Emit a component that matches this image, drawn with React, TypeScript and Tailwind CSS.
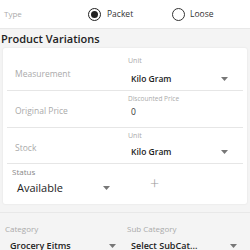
import React from "react";

const Caret = () => (
  <svg width="7" height="4" viewBox="0 0 7 4" className="shrink-0">
    <path d="M0 0 L7 0 L3.5 4 Z" fill="#777" />
  </svg>
);

export default function App() {
  return (
    <div
      className="w-[250px] h-[250px] overflow-hidden bg-[#f4f4f4] text-[#333]"
      style={{ fontFamily: '"Open Sans", sans-serif' }}
    >
      <div className="h-[29px] bg-white border-b border-[#e8e8e8] flex items-center">
        <div className="w-[88px] pl-[4px] text-[8px] text-[#aaa]">Type</div>
        <div className="flex items-center gap-[6px] w-[84px]">
          <div className="w-[13px] h-[13px] rounded-full border-[1.5px] border-[#222] flex items-center justify-center">
            <div className="w-[7px] h-[7px] rounded-full bg-[#222]" />
          </div>
          <span className="text-[8.5px] text-[#333]">Packet</span>
        </div>
        <div className="flex items-center gap-[5px]">
          <div className="w-[13px] h-[13px] rounded-full border-[1.5px] border-[#333]" />
          <span className="text-[8.5px] text-[#333]">Loose</span>
        </div>
      </div>
      <div className="pt-[3px] pl-[1px] text-[11px] font-semibold text-[#222] leading-[14px]">Product Variations</div>
      <div className="mx-[3px] mt-[2px] bg-white rounded-[2px] shadow-[0_0_2px_rgba(0,0,0,0.1)] px-[4px]">
        <div className="flex border-b border-[#e6e6e6] h-[43px]">
          <div className="w-[121px] pl-[8px] pt-[20px] text-[8.5px] leading-[12px] text-[#aaa]">Measurement</div>
          <div className="flex-1 pt-[8px]">
            <div className="text-[7px] text-[#aaa] leading-[10px]">Unit</div>
            <div className="flex items-center justify-between pl-[3px] pr-[15px] mt-[7px] h-[12px]">
              <span className="text-[8.5px] font-semibold text-[#222] leading-[12px]">Kilo Gram</span>
              <Caret />
            </div>
          </div>
        </div>
        <div className="flex border-b border-[#e6e6e6] h-[37px]">
          <div className="w-[121px] pl-[8px] pt-[14px] text-[8.5px] leading-[12px] text-[#aaa]">Original Price</div>
          <div className="flex-1 pt-[3px]">
            <div className="text-[6.5px] text-[#aaa] leading-[9px]">Discounted Price</div>
            <div className="pl-[3px] mt-[3px] text-[8.5px] leading-[12px] text-[#333]">0</div>
          </div>
        </div>
        <div className="flex border-b border-[#e6e6e6] h-[36px]">
          <div className="w-[121px] pl-[8px] pt-[14px] text-[8.5px] leading-[12px] text-[#aaa]">Stock</div>
          <div className="flex-1 pt-[3px]">
            <div className="text-[7px] text-[#aaa] leading-[10px]">Unit</div>
            <div className="flex items-center justify-between pl-[3px] pr-[15px] mt-[5px] h-[12px]">
              <span className="text-[8.5px] font-semibold text-[#222] leading-[12px]">Kilo Gram</span>
              <Caret />
            </div>
          </div>
        </div>
        <div className="flex items-start pt-[3px] h-[40px]">
          <div className="w-[104px] pl-[5px]">
            <div className="text-[8px] text-[#888] leading-[10px]">Status</div>
            <div className="flex items-center justify-between pl-[5px] pr-[1px] mt-[4px] h-[14px]">
              <span className="text-[11px] text-[#222] leading-[14px]">Available</span>
              <Caret />
            </div>
          </div>
          <div className="ml-[39px] mt-[8px] text-[16px] text-[#999] leading-[16px] font-light">+</div>
        </div>
      </div>
      <div className="mt-[8px] border-t border-[#e8e8e8] flex pt-[10px]">
        <div className="w-[122px] pl-[5px] pr-[6px]">
          <div className="text-[8px] text-[#aaa] leading-[12px]">Category</div>
          <div className="flex items-center justify-between pl-[5px] mt-[5px] h-[12px]">
            <span className="text-[9px] font-semibold text-[#222] leading-[12px]">Grocery Eitms</span>
            <Caret />
          </div>
        </div>
        <div className="flex-1 pl-[5px] pr-[13px]">
          <div className="text-[8px] text-[#aaa] leading-[12px]">Sub Category</div>
          <div className="flex items-center justify-between pl-[4px] mt-[5px] h-[12px]">
            <span className="text-[9px] font-semibold text-[#222] leading-[12px]">Select SubCat...</span>
            <Caret />
          </div>
        </div>
      </div>
    </div>
  );
}
